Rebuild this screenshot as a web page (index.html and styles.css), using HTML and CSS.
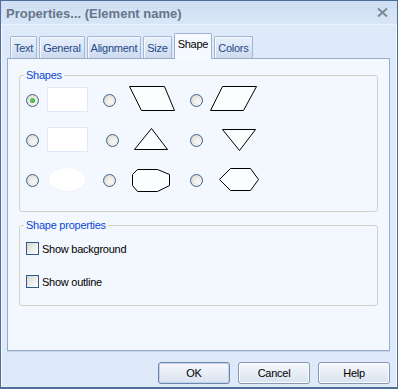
FILE: index.html
```html
<!DOCTYPE html>
<html>
<head>
<meta charset="utf-8">
<link rel="stylesheet" href="styles.css">
</head>
<body>
<div class="window">
  <div class="titlebar">
    <span class="title">Properties... (Element name)</span>
    <svg class="close" width="11" height="9" viewBox="0 0 11 9"><path d="M1 0.5 L10 8.5 M10 0.5 L1 8.5" stroke="#7d899b" stroke-width="2" fill="none"/></svg>
  </div>
  <div class="body">
    <div class="tabs">
      <div class="tab">Text</div>
      <div class="tab">General</div>
      <div class="tab">Alignment</div>
      <div class="tab">Size</div>
      <div class="tab active">Shape</div>
      <div class="tab">Colors</div>
    </div>
    <div class="panel">
      <fieldset class="group shapes">
        <legend>Shapes</legend>
        <div class="row">
          <div class="cell c1"><span class="radio checked"></span>
            <svg class="shape s1" width="41" height="26" viewBox="0 0 41 26"><rect x="0.5" y="1.5" width="40" height="24" fill="#fff" stroke="#dfe8f6"/></svg></div>
          <div class="cell c2"><span class="radio"></span>
            <svg class="shape s2" width="52" height="26" viewBox="0 0 52 26"><polygon points="6.5,0.5 41.5,0.5 51.5,24.5 18.5,24.5" fill="#fbfdff" stroke="#000"/></svg></div>
          <div class="cell c3"><span class="radio"></span>
            <svg class="shape s3" width="52" height="26" viewBox="0 0 52 26"><polygon points="15.5,0.5 49.5,0.5 36.5,24.5 3.5,24.5" fill="#fbfdff" stroke="#000"/></svg></div>
        </div>
        <div class="row">
          <div class="cell c1"><span class="radio"></span>
            <svg class="shape s1" width="41" height="26" viewBox="0 0 41 26"><rect x="0.5" y="1.5" width="40" height="24" fill="#fff" stroke="#dfe8f6"/></svg></div>
          <div class="cell c2 nudge"><span class="radio"></span>
            <svg class="shape s2" width="52" height="26" viewBox="0 0 52 26"><polygon points="28.5,2.5 11.5,23.5 44.5,23.5" fill="#fbfdff" stroke="#000"/></svg></div>
          <div class="cell c3"><span class="radio"></span>
            <svg class="shape s3" width="52" height="26" viewBox="0 0 52 26"><polygon points="15.5,3.5 48.5,3.5 32.5,24.5" fill="#fbfdff" stroke="#000"/></svg></div>
        </div>
        <div class="row">
          <div class="cell c1"><span class="radio"></span>
            <svg class="shape s1" width="41" height="26" viewBox="0 0 41 26"><ellipse cx="20" cy="13.5" rx="19" ry="12" fill="#fff" stroke="#eef3fb"/></svg></div>
          <div class="cell c2"><span class="radio"></span>
            <svg class="shape s2" width="52" height="26" viewBox="0 0 52 26"><polygon points="14.5,3.5 34.5,3.5 46.5,8.5 46.5,19.5 34.5,25.5 14.5,25.5 9.5,19.5 9.5,8.5" fill="#fbfdff" stroke="#000"/></svg></div>
          <div class="cell c3"><span class="radio"></span>
            <svg class="shape s3" width="52" height="26" viewBox="0 0 52 26"><polygon points="12.5,13.5 23.5,2.5 43.5,2.5 51.5,13.5 43.5,24.5 23.5,24.5" fill="#fbfdff" stroke="#000"/></svg></div>
        </div>
      </fieldset>
      <fieldset class="group props">
        <legend>Shape properties</legend>
        <label class="check"><span class="box"></span><span class="ctext">Show background</span></label>
        <label class="check"><span class="box"></span><span class="ctext">Show outline</span></label>
      </fieldset>
    </div>
    <div class="buttons">
      <button class="btn default">OK</button>
      <button class="btn">Cancel</button>
      <button class="btn">Help</button>
    </div>
  </div>
</div>
</body>
</html>
```

FILE: styles.css
```css
* { box-sizing: border-box; }
html, body { margin: 0; padding: 0; }
body {
  font-family: "Liberation Sans", Arial, sans-serif;
  font-size: 11px;
  letter-spacing: -0.25px;
  color: #000;
  background: #fff;
}
.window {
  width: 398px;
  height: 389px;
  border: 1px solid #4f6f9b;
  border-bottom-width: 2px;
  background: #dee9f9;
  box-shadow: inset 1px 0 0 #f4f8fd, inset -1px 0 0 #f4f8fd;
  display: flex;
  flex-direction: column;
}
.titlebar {
  height: 24px;
  flex: none;
  display: flex;
  align-items: center;
  justify-content: space-between;
  padding: 2px 9px 0 5px;
  background: linear-gradient(#cfdef2, #d9e6f7);
  border-bottom: 1px solid #ecf2fb;
}
.title {
  font-weight: bold;
  font-size: 13px;
  letter-spacing: 0;
  color: #66768b;
}
.close { display: block; margin-top: -2px; }
.body {
  flex: 1;
  display: flex;
  flex-direction: column;
  padding: 8px 7px 0 6px;
}
.tabs {
  display: flex;
  align-items: flex-end;
  gap: 2px;
  height: 25px;
  padding-left: 3px;
  position: relative;
  z-index: 1;
}
.tab {
  height: 22px;
  padding: 4px 3px 0;
  border: 1px solid #a4b7d5;
  border-bottom: none;
  border-radius: 2px 2px 0 0;
  background: linear-gradient(#e9f0fb, #cddbf0);
  box-shadow: inset 1px 1px 0 #f6f9fe;
  color: #244a88;
  line-height: 14px;
}
.tab.active {
  height: 26px;
  margin-bottom: -1px;
  padding-top: 3px;
  background: #f6f9ff;
  box-shadow: none;
  color: #000;
  border-color: #9fb2cf;
}
.panel {
  height: 293px;
  border: 1px solid #97aac8;
  background: #f3f7fe;
  padding: 0 11px;
  box-shadow: 0 1px 0 #c9d5e8;
}
.group {
  margin: 0;
  border: 1px solid #d2d3c6;
  border-radius: 3px;
  padding: 4px 0 20px 4px;
  min-width: 0;
}
.group legend {
  padding: 0 2px;
  line-height: 13px;
  color: #0a47d6;
}
.shapes { margin-top: 10px; }
.row {
  display: grid;
  grid-template-columns: 77px 87px 1fr;
  height: 25px;
  margin-left: 2px;
}
.row + .row { margin-top: 15px; }
.cell {
  display: flex;
  align-items: flex-start;
}
.radio {
  flex: none;
  width: 13px;
  height: 13px;
  margin-top: 8px;
  border-radius: 50%;
  border: 1px solid #3c6590;
  background: radial-gradient(circle at 60% 60%, #fbfbf9 0%, #ebeae5 45%, #cfcdc4 100%);
  display: flex;
  align-items: center;
  justify-content: center;
}
.radio.checked::after {
  content: "";
  width: 5px;
  height: 5px;
  border-radius: 50%;
  background: radial-gradient(circle at 40% 40%, #6fd36f, #1e9a1e);
}
.shape { display: block; flex: none; }
.c1 .shape { margin-left: 8px; }
.c2 .shape { margin-left: 7px; }
.c2.nudge .radio { margin-left: 3px; }
.c2.nudge .shape { margin-left: 4px; }
.c3 .shape { margin-left: 4px; }
.props {
  margin-top: 7px;
  padding: 10px 0 17px 4px;
}
.check {
  display: flex;
  align-items: flex-start;
  height: 13px;
  margin-left: 2px;
}
.check + .check { margin-top: 20px; }
.box {
  flex: none;
  width: 13px;
  height: 13px;
  border: 1px solid #2d5b8c;
  background: linear-gradient(135deg, #d9d8d0, #f7f7f4 80%, #fdfdfc);
}
.ctext {
  margin-left: 3px;
  line-height: 13px;
  margin-top: 1px;
}
.buttons {
  display: flex;
  justify-content: flex-end;
  gap: 8px;
  margin-top: 11px;
}
.btn {
  width: 72px;
  height: 22px;
  padding: 0;
  font-family: "Liberation Sans", Arial, sans-serif;
  font-size: 11px;
  font-weight: normal;
  letter-spacing: -0.25px;
  color: #000;
  border: 1px solid #8597b4;
  border-radius: 3px;
  background: linear-gradient(#f6f8fc, #e6ecf5 55%, #d9e2ef);
  box-shadow: inset 0 0 0 1px #fbfcfe;
}
.btn.default {
  border-color: #6d86ad;
  box-shadow: inset 0 0 0 1px #c2d3ec;
}
```
